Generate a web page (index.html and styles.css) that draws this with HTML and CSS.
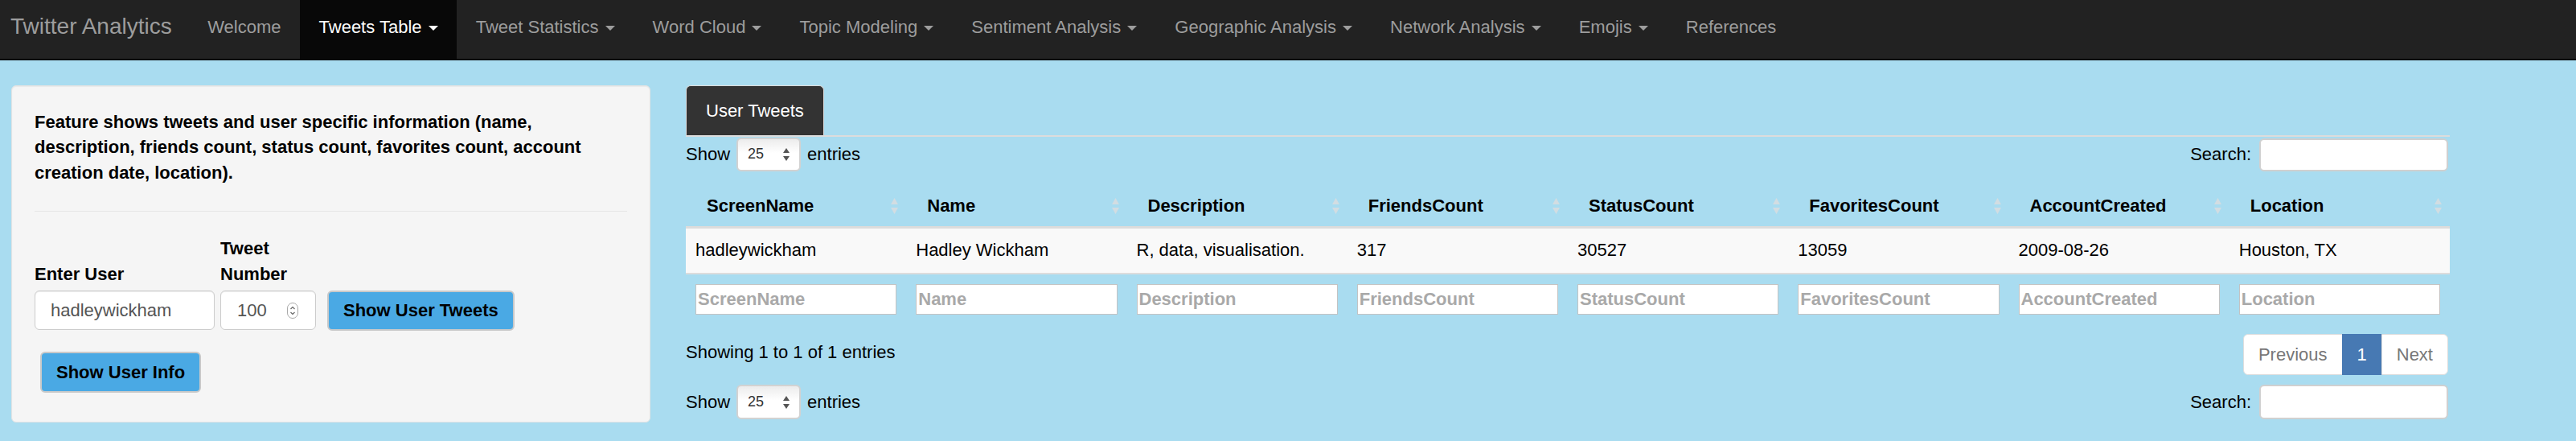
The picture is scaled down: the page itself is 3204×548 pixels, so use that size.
FILE: index.html
```html
<!DOCTYPE html>
<html lang="en">
<head>
<meta charset="utf-8">
<title>Twitter Analytics</title>
<link rel="stylesheet" href="styles.css">
</head>
<body>
<nav class="navbar">
  <a class="brand" href="#">Twitter Analytics</a>
  <ul class="nav">
    <li><a href="#">Welcome</a></li>
    <li class="active"><a href="#">Tweets Table <span class="caret"></span></a></li>
    <li><a href="#">Tweet Statistics <span class="caret"></span></a></li>
    <li><a href="#">Word Cloud <span class="caret"></span></a></li>
    <li><a href="#">Topic Modeling <span class="caret"></span></a></li>
    <li><a href="#">Sentiment Analysis <span class="caret"></span></a></li>
    <li><a href="#">Geographic Analysis <span class="caret"></span></a></li>
    <li><a href="#">Network Analysis <span class="caret"></span></a></li>
    <li><a href="#">Emojis <span class="caret"></span></a></li>
    <li><a href="#">References</a></li>
  </ul>
</nav>

<div class="page">
  <aside class="well">
    <p class="intro">Feature shows tweets and user specific information (name, description, friends count, status count, favorites count, account creation date, location).</p>
    <hr>
    <div class="inputs">
      <div class="group user">
        <label>Enter User</label>
        <input class="text-input" type="text" value="hadleywickham">
      </div>
      <div class="group num">
        <label>Tweet Number</label>
        <div class="numbox">
          <span>100</span>
          <svg class="spinner" width="14" height="20" viewBox="0 0 14 20"><rect x="0.5" y="0.5" width="13" height="19" rx="6.5" fill="#fff" stroke="#a8a8a8"/><polyline points="4.5,8 7,5.5 9.5,8" fill="none" stroke="#666" stroke-width="1.2"/><polyline points="4.5,12 7,14.5 9.5,12" fill="none" stroke="#666" stroke-width="1.2"/></svg>
        </div>
      </div>
      <button class="btn btn-tweets">Show User Tweets</button>
    </div>
    <button class="btn btn-info">Show User Info</button>
  </aside>

  <main class="main">
    <ul class="tabs">
      <li class="active">User Tweets</li>
    </ul>

    <div class="dt-row dt-top">
      <div class="length">Show
        <span class="select">25<svg class="sel-arrows" width="8" height="16" viewBox="0 0 8 16"><polygon points="0,6 4,0 8,6" fill="#555"/><polygon points="0,10 8,10 4,16" fill="#555"/></svg></span>
        entries</div>
      <div class="search">Search: <span class="search-box"></span></div>
    </div>

    <table class="dt">
      <thead>
        <tr>
          <th>ScreenName<svg class="sort" width="9" height="20" viewBox="0 0 9 20"><polygon points="0,8 4.5,0 9,8"/><polygon points="0,12 9,12 4.5,20"/></svg></th>
          <th>Name<svg class="sort" width="9" height="20" viewBox="0 0 9 20"><polygon points="0,8 4.5,0 9,8"/><polygon points="0,12 9,12 4.5,20"/></svg></th>
          <th>Description<svg class="sort" width="9" height="20" viewBox="0 0 9 20"><polygon points="0,8 4.5,0 9,8"/><polygon points="0,12 9,12 4.5,20"/></svg></th>
          <th>FriendsCount<svg class="sort" width="9" height="20" viewBox="0 0 9 20"><polygon points="0,8 4.5,0 9,8"/><polygon points="0,12 9,12 4.5,20"/></svg></th>
          <th>StatusCount<svg class="sort" width="9" height="20" viewBox="0 0 9 20"><polygon points="0,8 4.5,0 9,8"/><polygon points="0,12 9,12 4.5,20"/></svg></th>
          <th>FavoritesCount<svg class="sort" width="9" height="20" viewBox="0 0 9 20"><polygon points="0,8 4.5,0 9,8"/><polygon points="0,12 9,12 4.5,20"/></svg></th>
          <th>AccountCreated<svg class="sort" width="9" height="20" viewBox="0 0 9 20"><polygon points="0,8 4.5,0 9,8"/><polygon points="0,12 9,12 4.5,20"/></svg></th>
          <th>Location<svg class="sort" width="9" height="20" viewBox="0 0 9 20"><polygon points="0,8 4.5,0 9,8"/><polygon points="0,12 9,12 4.5,20"/></svg></th>
        </tr>
      </thead>
      <tbody>
        <tr class="odd">
          <td>hadleywickham</td>
          <td>Hadley Wickham</td>
          <td>R, data, visualisation.</td>
          <td>317</td>
          <td>30527</td>
          <td>13059</td>
          <td>2009-08-26</td>
          <td>Houston, TX</td>
        </tr>
      </tbody>
      <tfoot>
        <tr>
          <td><input class="filter" type="text" placeholder="ScreenName"></td>
          <td><input class="filter" type="text" placeholder="Name"></td>
          <td><input class="filter" type="text" placeholder="Description"></td>
          <td><input class="filter" type="text" placeholder="FriendsCount"></td>
          <td><input class="filter" type="text" placeholder="StatusCount"></td>
          <td><input class="filter" type="text" placeholder="FavoritesCount"></td>
          <td><input class="filter" type="text" placeholder="AccountCreated"></td>
          <td><input class="filter" type="text" placeholder="Location"></td>
        </tr>
      </tfoot>
    </table>

    <div class="dt-row dt-info">
      <div class="info">Showing 1 to 1 of 1 entries</div>
      <ul class="pagination">
        <li class="disabled"><a href="#">Previous</a></li>
        <li class="active"><a href="#">1</a></li>
        <li class="disabled"><a href="#">Next</a></li>
      </ul>
    </div>

    <div class="dt-row dt-bottom">
      <div class="length">Show
        <span class="select tall">25<svg class="sel-arrows" width="8" height="16" viewBox="0 0 8 16"><polygon points="0,6 4,0 8,6" fill="#555"/><polygon points="0,10 8,10 4,16" fill="#555"/></svg></span>
        entries</div>
      <div class="search">Search: <span class="search-box tall"></span></div>
    </div>
  </main>
</div>
</body>
</html>
```

FILE: styles.css
```css
* { box-sizing: border-box; }

html, body {
  margin: 0;
  padding: 0;
  height: 548px;
  overflow: hidden;
}

body {
  background: #a9dcf0;
  font-family: "Liberation Sans", Arial, Helvetica, sans-serif;
  font-size: 22px;
  line-height: 1.42857;
  color: #000;
}

/* ---------- navbar ---------- */
.navbar {
  display: flex;
  height: 75px;
  background: #222;
  border-bottom: 2px solid #080808;
}

.brand {
  font-size: 28px;
  line-height: 30px;
  color: #9d9d9d;
  text-decoration: none;
  padding: 18px 21px 0 13px;
}

.nav {
  display: flex;
  list-style: none;
  margin: 0;
  padding: 0;
}

.nav a {
  display: block;
  height: 73px;
  padding: 19px 23.5px 0;
  line-height: 30px;
  color: #9d9d9d;
  text-decoration: none;
  white-space: nowrap;
}

.nav .active a {
  background: #080808;
  color: #fff;
}

.caret {
  display: inline-block;
  width: 0;
  height: 0;
  margin-left: 2px;
  vertical-align: middle;
  border-top: 6px solid;
  border-left: 6px solid transparent;
  border-right: 6px solid transparent;
}

/* ---------- layout ---------- */
.page {
  display: flex;
  align-items: flex-start;
  gap: 44px;
  padding: 31px 0 0 14px;
}

/* ---------- sidebar well ---------- */
.well {
  flex: none;
  width: 795px;
  min-height: 419px;
  padding: 29px 28px;
  background: #f5f5f5;
  border: 1px solid #e3e3e3;
  border-radius: 6px;
  box-shadow: inset 0 1px 1px rgba(0, 0, 0, .05);
}

.intro {
  margin: 0;
  font-weight: bold;
}

.well hr {
  margin: 32px 0 30px;
  border: 0;
  border-top: 1px solid #e6e6e6;
}

.inputs {
  display: flex;
  align-items: flex-end;
}

.group {
  display: flex;
  flex-direction: column;
}

.group label {
  font-weight: bold;
  margin-bottom: 5px;
}

.user { width: 224px; }
.num { width: 119px; margin-left: 7px; }

.text-input {
  height: 49px;
  width: 100%;
  padding: 0 19px;
  border: 1px solid #ccc;
  border-radius: 6px;
  background: #fff;
  font: inherit;
  color: #555;
  box-shadow: inset 0 1px 1px rgba(0, 0, 0, .075);
}

.numbox {
  height: 49px;
  display: flex;
  align-items: center;
  justify-content: space-between;
  padding: 0 21px 0 20px;
  border: 1px solid #ccc;
  border-radius: 6px;
  background: #fff;
  color: #555;
  box-shadow: inset 0 1px 1px rgba(0, 0, 0, .075);
}

.btn {
  display: block;
  height: 50px;
  padding: 0 18px;
  background: #4aa9e4;
  border: 2px solid #c9c9c9;
  border-radius: 6px;
  font: inherit;
  font-weight: bold;
  color: #000;
  white-space: nowrap;
}

.btn-tweets {
  margin-left: 14px;
  margin-bottom: -1px;
}

.btn-info {
  height: 51px;
  margin: 27px 0 0 7px;
}

/* ---------- main panel ---------- */
.main {
  flex: none;
  width: 2194px;
}

.tabs {
  display: flex;
  list-style: none;
  margin: 0;
  padding: 0;
  border-bottom: 2px solid #dcdcdc;
}

.tabs li {
  height: 62px;
  line-height: 61px;
  padding: 0 24px;
  background: #333;
  color: #fff;
  border: 1px solid #ddd;
  border-bottom: 0;
  border-radius: 6px 6px 0 0;
}

.dt-row {
  display: flex;
  justify-content: space-between;
  align-items: center;
}

.dt-top {
  height: 42px;
  margin-top: 1px;
}

.length {
  display: flex;
  align-items: center;
  gap: 8px;
}

.select {
  position: relative;
  display: flex;
  align-items: center;
  width: 80px;
  height: 42px;
  padding-left: 12px;
  font-size: 18px;
  color: #333;
  border: 2px solid #d2d2d2;
  border-radius: 6px;
  background: linear-gradient(#ececec, #fff 45%, #fff);
}

.select.tall { height: 43px; }

.sel-arrows {
  position: absolute;
  right: 12px;
  top: 50%;
  margin-top: -8px;
}

.search {
  display: flex;
  align-items: center;
  gap: 10px;
  margin-right: 2px;
}

.search-box {
  display: block;
  width: 235px;
  height: 41px;
  background: #fff;
  border: 2px solid #d0d0d0;
  border-radius: 6px;
}

.search-box.tall { height: 43px; }

/* ---------- table ---------- */
.dt {
  width: 100%;
  table-layout: fixed;
  border-collapse: separate;
  border-spacing: 0;
  margin-top: 18px;
}

.dt th {
  position: relative;
  padding: 10px 26px;
  line-height: 30px;
  text-align: left;
  font-weight: bold;
  border-bottom: 3px solid #dcdcdc;
  white-space: nowrap;
}

.sort {
  position: absolute;
  right: 10px;
  top: 50%;
  margin-top: -10px;
  fill: #d2dde2;
}

.dt td {
  padding: 12px;
  line-height: 30px;
  white-space: nowrap;
}

.dt tbody tr {
  background: #f9f9f9;
}

.dt tbody td {
  padding: 12px 12px 13px;
  border-bottom: 2px solid #dcdcdc;
}

.filter {
  display: block;
  width: 100%;
  height: 38px;
  padding: 0 2px;
  border: 1px solid #c3c3c3;
  border-radius: 0;
  background: #fff;
  font: inherit;
  font-weight: bold;
}

.filter::placeholder {
  color: #a9a9a9;
}

/* ---------- info / pagination ---------- */
.dt-info {
  margin-top: 12px;
  align-items: flex-start;
}

.info {
  padding-top: 7px;
}

.pagination {
  display: flex;
  list-style: none;
  margin: 0 2px 0 0;
  padding: 0;
}

.pagination a {
  display: block;
  height: 51px;
  padding: 9px 18px;
  line-height: 31px;
  background: #fff;
  color: #777;
  text-decoration: none;
  border: 1px solid #ddd;
  margin-left: -1px;
}

.pagination li:first-child a {
  margin-left: 0;
  border-radius: 6px 0 0 6px;
}

.pagination li:last-child a {
  border-radius: 0 6px 6px 0;
}

.pagination .active a {
  background: #4779b3;
  border-color: #4779b3;
  color: #fff;
}

.dt-bottom {
  margin-top: 12px;
}
```
